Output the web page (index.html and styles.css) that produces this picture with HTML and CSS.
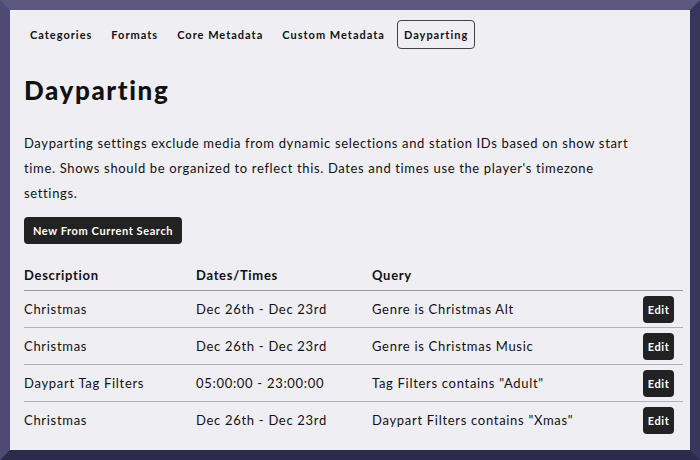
FILE: index.html
```html
<!DOCTYPE html>
<html lang="en">
<head>
<meta charset="UTF-8">
<meta name="viewport" content="width=device-width, initial-scale=1.0">
<title>Dayparting</title>
<link rel="stylesheet" href="styles.css">
</head>
<body>
  <div class="panel">
    <nav class="tabs">
      <a class="tab">Categories</a>
      <a class="tab">Formats</a>
      <a class="tab">Core Metadata</a>
      <a class="tab">Custom Metadata</a>
      <a class="tab active">Dayparting</a>
    </nav>

    <h1>Dayparting</h1>
    <p class="intro">Dayparting settings exclude media from dynamic selections and station IDs based on show start time. Shows should be organized to reflect this. Dates and times use the player's timezone settings.</p>

    <button class="btn new">New From Current Search</button>

    <table class="rules">
      <thead>
        <tr>
          <th class="col-desc">Description</th>
          <th class="col-dates">Dates/Times</th>
          <th>Query</th>
          <th class="col-action"></th>
        </tr>
      </thead>
      <tbody>
        <tr>
          <td>Christmas</td>
          <td>Dec 26th - Dec 23rd</td>
          <td>Genre is Christmas Alt</td>
          <td class="col-action"><button class="btn small">Edit</button></td>
        </tr>
        <tr>
          <td>Christmas</td>
          <td>Dec 26th - Dec 23rd</td>
          <td>Genre is Christmas Music</td>
          <td class="col-action"><button class="btn small">Edit</button></td>
        </tr>
        <tr>
          <td>Daypart Tag Filters</td>
          <td>05:00:00 - 23:00:00</td>
          <td>Tag Filters contains "Adult"</td>
          <td class="col-action"><button class="btn small">Edit</button></td>
        </tr>
        <tr>
          <td>Christmas</td>
          <td>Dec 26th - Dec 23rd</td>
          <td>Daypart Filters contains "Xmas"</td>
          <td class="col-action"><button class="btn small">Edit</button></td>
        </tr>
      </tbody>
    </table>
  </div>
</body>
</html>
```

FILE: styles.css
```css
body {
  margin: 0;
  background-color: #4f4a73;
  font-family: Lato, "Noto Sans", sans-serif;
  color: #111;
}

.panel {
  box-sizing: border-box;
  width: 700px;
  height: 460px;
  background-color: #efeef3;
  border-style: solid;
  border-width: 10px;
  border-color: #5d5880 #3a355c #2d2a4b #4f4a73;
  padding: 10px 7px 0 14px;
  overflow: hidden;
}

.tabs {
  display: flex;
  gap: 5px;
  margin-left: -1px;
}

.tab {
  padding: 7px 6px;
  font-size: 11px;
  font-weight: bold;
  letter-spacing: 1px;
  line-height: 13px;
  border: 1px solid transparent;
  border-radius: 4px;
}

.tab.active {
  border-color: #444;
}

h1 {
  margin: 26px 0 0;
  font-size: 26px;
  line-height: 30px;
  letter-spacing: 1.6px;
  font-weight: 900;
}

.intro {
  margin: 26px 0 0;
  font-size: 13px;
  line-height: 25px;
  letter-spacing: 0.65px;
  padding-right: 45px;
}

.btn {
  font-family: Lato, "Noto Sans", sans-serif;
  background-color: #222;
  color: #fff;
  border: none;
  border-radius: 4px;
  font-size: 11px;
  font-weight: bold;
  letter-spacing: 0.6px;
  height: 27px;
  padding: 0 5px;
  line-height: 27px;
  cursor: pointer;
}

.btn.new {
  display: block;
  margin-top: 11px;
  width: 158px;
}

.rules {
  width: 100%;
  margin-top: 13px;
  border-collapse: collapse;
  font-size: 13px;
  letter-spacing: 0.7px;
}

.rules th {
  text-align: left;
  font-weight: bold;
  padding: 0 0 7px;
  height: 26px;
  vertical-align: bottom;
  border-bottom: 1px solid #999;
}

.rules td {
  padding: 0;
  height: 36px;
  border-bottom: 1px solid #b0b0b6;
}

.rules tbody tr:last-child td {
  border-bottom: none;
}

.col-desc {
  width: 172px;
}

.col-dates {
  width: 176px;
}

.rules .col-action {
  width: 40px;
  text-align: right;
  padding-right: 9px;
}

.btn.small {
  width: 31px;
  padding: 0;
  text-align: center;
  vertical-align: middle;
}
```
